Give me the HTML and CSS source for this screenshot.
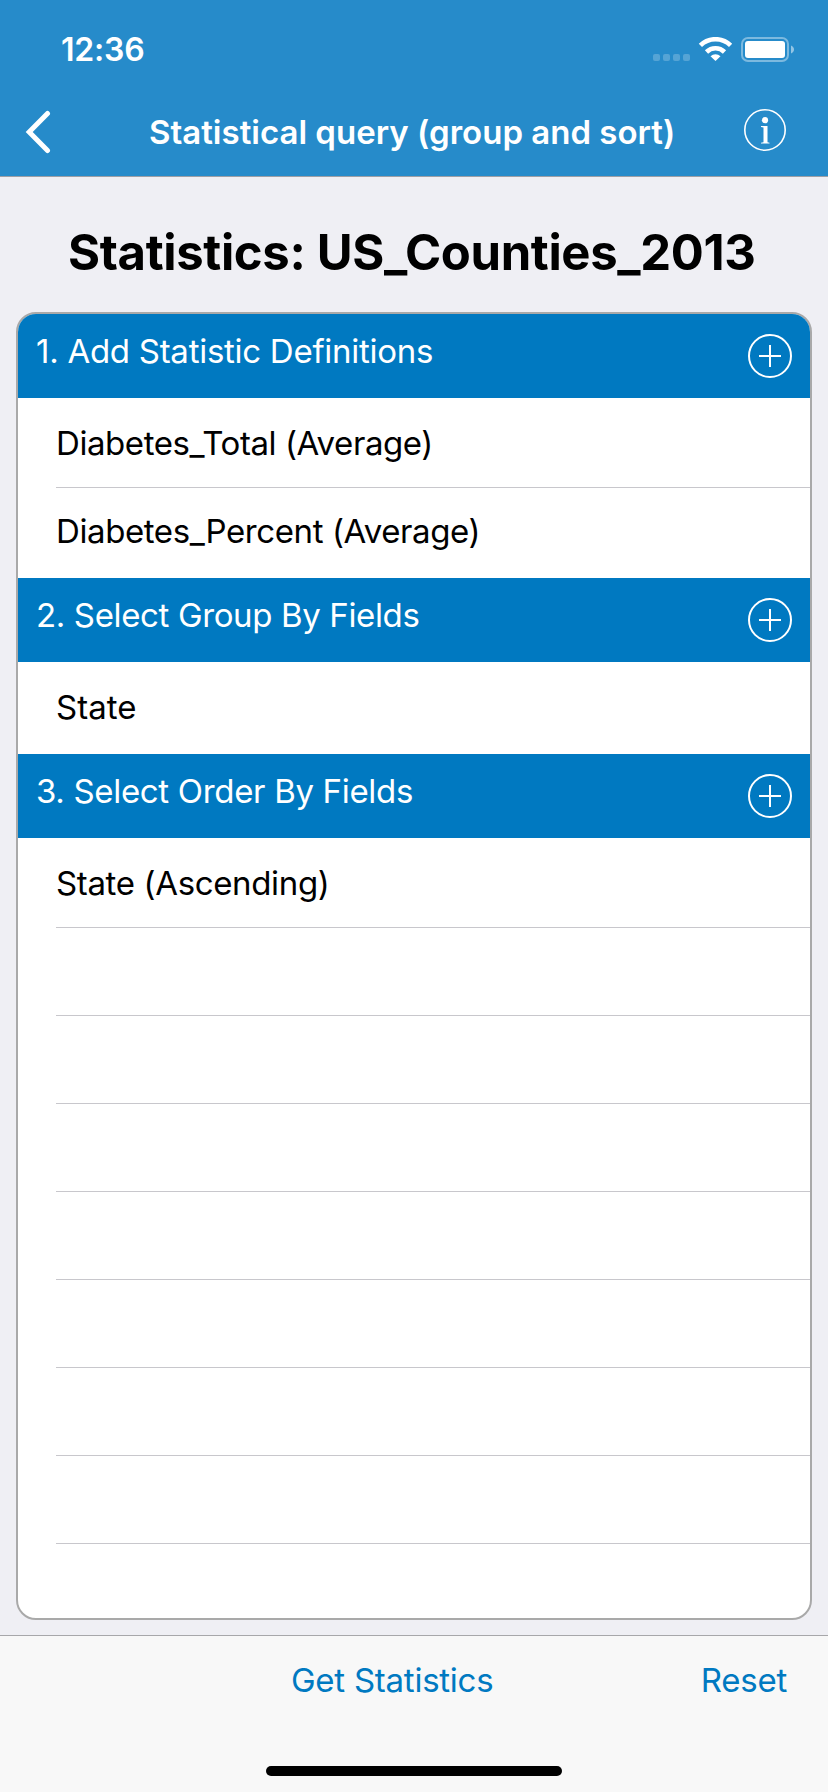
FILE: index.html
```html
<!DOCTYPE html>
<html lang="en">
<head>
<meta charset="utf-8">
<title>Statistical query</title>
<link rel="stylesheet" href="styles.css">
</head>
<body>
<div class="screen">
  <header class="top">
    <div class="status">
      <span class="time">12:36</span>
      <svg class="indicators" width="142" height="26" viewBox="0 0 142 26">
        <g fill="#fff" fill-opacity=".22">
          <rect x="0" y="17" width="7" height="7" rx="2"/><rect x="10" y="17" width="7" height="7" rx="2"/><rect x="20" y="17" width="7" height="7" rx="2"/><rect x="30" y="17" width="7" height="7" rx="2"/>
        </g>
        <g fill="none" stroke="#fff" stroke-width="4.6">
          <path d="M47.400 8.400A21.500 21.500 0 0 1 77.600 8.400"/>
          <path d="M53.500 15A12.800 12.800 0 0 1 71.500 15"/>
        </g>
        <path d="M62.500 24l-5-4.800a7.200 7.200 0 0 1 10 0z" fill="#fff"/>
        <rect x="89" y="1" width="46" height="23" rx="6" fill="none" stroke="#fff" stroke-opacity=".4" stroke-width="2"/>
        <rect x="92" y="4" width="40" height="17" rx="3" fill="#fff"/>
        <path d="M138 8.500c4 1.600 4 6.400 0 8z" fill="#fff" fill-opacity=".5"/>
      </svg>
    </div>
    <nav class="nav">
      <svg class="back" width="28" height="44" viewBox="0 0 28 44"><path d="M23.500 3.500L5.200 22l18.300 18.500" fill="none" stroke="#fff" stroke-width="5" stroke-linecap="round" stroke-linejoin="miter"/></svg>
      <h1 class="nav-title">Statistical query (group and sort)</h1>
      <svg class="info" width="42" height="42" viewBox="0 0 42 42"><circle cx="21" cy="21" r="20.200" fill="none" stroke="#fff" stroke-width="1.600"/><circle cx="21" cy="11.200" r="3.100" fill="#fff"/><path d="M17 17h6.500v16.200l2 .5V34.500h-8.500v-.8l2.500-.5V18.500l-2.500-.6z" fill="#fff"/></svg>
    </nav>
  </header>
  <main class="content">
    <h2 class="heading">Statistics: US_Counties_2013</h2>
    <div class="card">
      <div class="section"><span class="section-title s1">1. Add Statistic Definitions</span><svg class="plus" width="44" height="44" viewBox="0 0 44 44"><circle cx="22" cy="22" r="21"/><path d="M22 11v22M11 22h22"/></svg></div>
      <div class="rows">
        <div class="row"><span class="label r1">Diabetes_Total (Average)</span></div>
        <div class="row last"><span class="label r2">Diabetes_Percent (Average)</span></div>
      </div>
      <div class="section"><span class="section-title s2">2. Select Group By Fields</span><svg class="plus" width="44" height="44" viewBox="0 0 44 44"><circle cx="22" cy="22" r="21"/><path d="M22 11v22M11 22h22"/></svg></div>
      <div class="rows">
        <div class="row last"><span class="label r3">State</span></div>
      </div>
      <div class="section"><span class="section-title s3">3. Select Order By Fields</span><svg class="plus" width="44" height="44" viewBox="0 0 44 44"><circle cx="22" cy="22" r="21"/><path d="M22 11v22M11 22h22"/></svg></div>
      <div class="rows">
        <div class="row"><span class="label r4">State (Ascending)</span></div>
        <div class="row"></div><div class="row"></div><div class="row"></div><div class="row"></div>
        <div class="row"></div><div class="row"></div><div class="row"></div>
      </div>
    </div>
  </main>
  <footer class="toolbar">
    <div class="actions">
      <span class="action get">Get Statistics</span>
      <span class="action reset">Reset</span>
    </div>
    <div class="home"></div>
  </footer>
</div>
</body>
</html>
```
FILE: styles.css
```css
* { box-sizing: border-box; }
body { margin: 0; font-family: Inter, "Liberation Sans", sans-serif; font-size: 33px; line-height: 40px; color: #000; }
.screen { width: 828px; height: 1792px; display: flex; flex-direction: column; background: #efeff4; overflow: hidden; white-space: nowrap; }
.top { height: 177px; background: #268bca; border-bottom: 1px solid #9c9fa6; color: #fff; }
.status { height: 88px; padding: 30px 33px 0 61px; display: flex; justify-content: space-between; }
.time { font-size: 32px; font-weight: 600; letter-spacing: -0.2px; }
.indicators { margin-top: 7px; }
.nav { height: 88px; padding: 0 42px 0 24px; display: flex; align-items: center; }
.nav-title { margin: 0 0 0 97px; flex: 1; font-size: 33px; font-weight: 600; line-height: 40px; }
.info { margin-bottom: 4px; }
.content { flex: 1; padding: 0 16px 15px; display: flex; flex-direction: column; }
.heading { margin: 0; padding: 46px 0 0 52px; height: 135px; font-size: 49px; font-weight: 700; line-height: 60px; letter-spacing: -0.35px; }
.card { flex: 1; border: 2px solid #a9a9a9; border-radius: 20px; background: #fff; overflow: hidden; }
.section { height: 84px; padding: 17px 18px 0 18px; display: flex; justify-content: space-between; background: #0079c1; color: #fff; }
.s1 { letter-spacing: -0.27px; }
.s2 { letter-spacing: -0.36px; }
.s3 { letter-spacing: -0.32px; }
.plus { margin-top: 3px; fill: none; stroke: #fff; stroke-width: 2; }
.rows { padding: 2px 0 2px 38px; }
.row { height: 88px; padding-top: 23px; border-bottom: 1px solid #c8c7cc; }
.row.last { border-bottom: 0; }
.r1 { letter-spacing: -0.43px; }
.r2 { letter-spacing: -0.4px; }
.r4 { letter-spacing: -0.35px; }
.toolbar { height: 157px; border-top: 1px solid #a7a7aa; background: #f8f8f8; color: #0079c1; display: flex; flex-direction: column; align-items: center; }
.actions { width: 100%; height: 130px; padding: 24px 41px 0 291px; display: flex; justify-content: space-between; letter-spacing: -0.25px; }
.home { width: 296px; height: 10px; border-radius: 5px; background: #000; }
```
